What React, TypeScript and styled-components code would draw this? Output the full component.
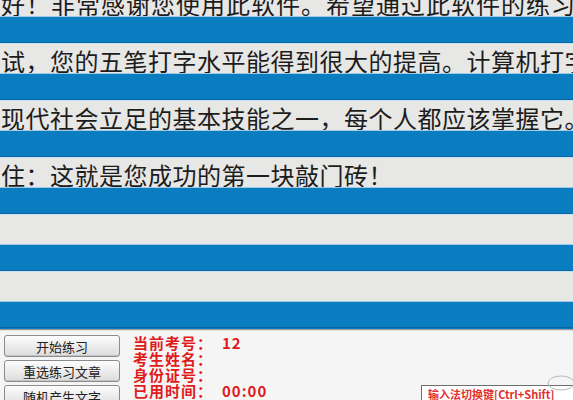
import React from 'react';
import styled, { createGlobalStyle } from 'styled-components';

const GlobalStyle = createGlobalStyle`
  html, body {
    margin: 0;
    padding: 0;
    overflow: hidden;
    background: #f4f4f4;
  }
`;

const CJK = `"Noto Sans CJK SC", "Noto Sans", sans-serif`;

const Screen = styled.div`
  width: 573px;
  height: 400px;
  overflow: hidden;
  display: flex;
  flex-direction: column;
  font-family: ${CJK};
`;

const Viewport = styled.div`
  height: 329px;
  flex: none;
  overflow: hidden;
  background: #0a7dc1;
  border-bottom: 1px solid #9a9a9a;
`;

// scrolled a little, so the first line sits half out of view
const Track = styled.div`
  margin-top: -14px;
  display: flex;
  flex-direction: column;
`;

const TextRow = styled.div<{ $spacing?: number }>`
  height: 31px;
  box-sizing: border-box;
  background: #e7e7e5;
  border-top: 1px solid #c6e2f4;
  border-bottom: 1px solid #9fcbe8;
  padding: 5px 0 0 1px;
  font-size: 24px;
  line-height: 24px;
  letter-spacing: ${(p) => p.$spacing ?? 0.5}px;
  color: #1c1c1c;
  white-space: nowrap;
  overflow: hidden;
`;

const InputRow = styled.div`
  height: 26px;
  box-sizing: border-box;
  background: #0a7dc1;
  border-bottom: 1px solid #0a66a3;
`;

const Panel = styled.div`
  flex: 1;
  display: grid;
  grid-template-columns: 116px 1fr 152px;
  column-gap: 13px;
  padding: 4px 0 0 4px;
  background: #f5f5f5;
  border-top: 1px solid #e2e2e2;
`;

const Buttons = styled.div`
  display: flex;
  flex-direction: column;
  gap: 3px;
`;

const Button = styled.button`
  height: 22px;
  flex: none;
  padding: 0;
  border: 1px solid #8c8c8c;
  border-radius: 3px;
  background: linear-gradient(#fdfdfd, #dcdcdc);
  font-family: ${CJK};
  font-size: 13px;
  color: #222;
  box-shadow: inset 0 -1px 0 #c4c4c4;
`;

const Info = styled.div`
  display: flex;
  flex-direction: column;
`;

const InfoLine = styled.div`
  display: flex;
  height: 16px;
  line-height: 16px;
  font-size: 15px;
  font-weight: 700;
  letter-spacing: 1px;
  color: #e11b1b;
  white-space: nowrap;
`;

const Label = styled.span`
  width: 89px;
  flex: none;
`;

const RightCol = styled.div`
  position: relative;
  padding-top: 50px;
`;

const HintBox = styled.div`
  height: 20px;
  box-sizing: border-box;
  border: 1px solid #6e6e6e;
  border-right: none;
  background: #fff;
  padding: 2px 0 0 6px;
  font-size: 11px;
  line-height: 13px;
  font-weight: 700;
  color: #e23030;
  white-space: nowrap;
  overflow: hidden;
`;

const Mark = styled.svg`
  position: absolute;
  right: 0;
  top: 36px;
`;

const lines = [
  { text: '好！非常感谢您使用此软件。希望通过此软件的练习', spacing: 1 },
  { text: '试，您的五笔打字水平能得到很大的提高。计算机打字' },
  { text: '现代社会立足的基本技能之一，每个人都应该掌握它。' },
  { text: '住：这就是您成功的第一块敲门砖！' },
  { text: '' },
  { text: '' },
];

const info = [
  { label: '当前考号：', value: '12' },
  { label: '考生姓名：', value: '' },
  { label: '身份证号：', value: '' },
  { label: '已用时间：', value: '00:00' },
  { label: '打字速度：', value: '0 字/分钟' },
];

export default function App() {
  return (
    <Screen>
      <GlobalStyle />
      <Viewport>
        <Track>
          {lines.map((line, i) => (
            <React.Fragment key={i}>
              <TextRow $spacing={line.spacing}>{line.text}</TextRow>
              <InputRow />
            </React.Fragment>
          ))}
        </Track>
      </Viewport>
      <Panel>
        <Buttons>
          <Button>开始练习</Button>
          <Button>重选练习文章</Button>
          <Button>随机产生文字</Button>
        </Buttons>
        <Info>
          {info.map((item) => (
            <InfoLine key={item.label}>
              <Label>{item.label}</Label>
              <span>{item.value}</span>
            </InfoLine>
          ))}
        </Info>
        <RightCol>
          <Mark width="34" height="20" viewBox="0 0 34 20">
            <ellipse cx="22" cy="12" rx="13" ry="7" fill="none" stroke="#b8b8b8" strokeWidth="1" />
          </Mark>
          <HintBox>输入法切换键[Ctrl+Shift]</HintBox>
        </RightCol>
      </Panel>
    </Screen>
  );
}
